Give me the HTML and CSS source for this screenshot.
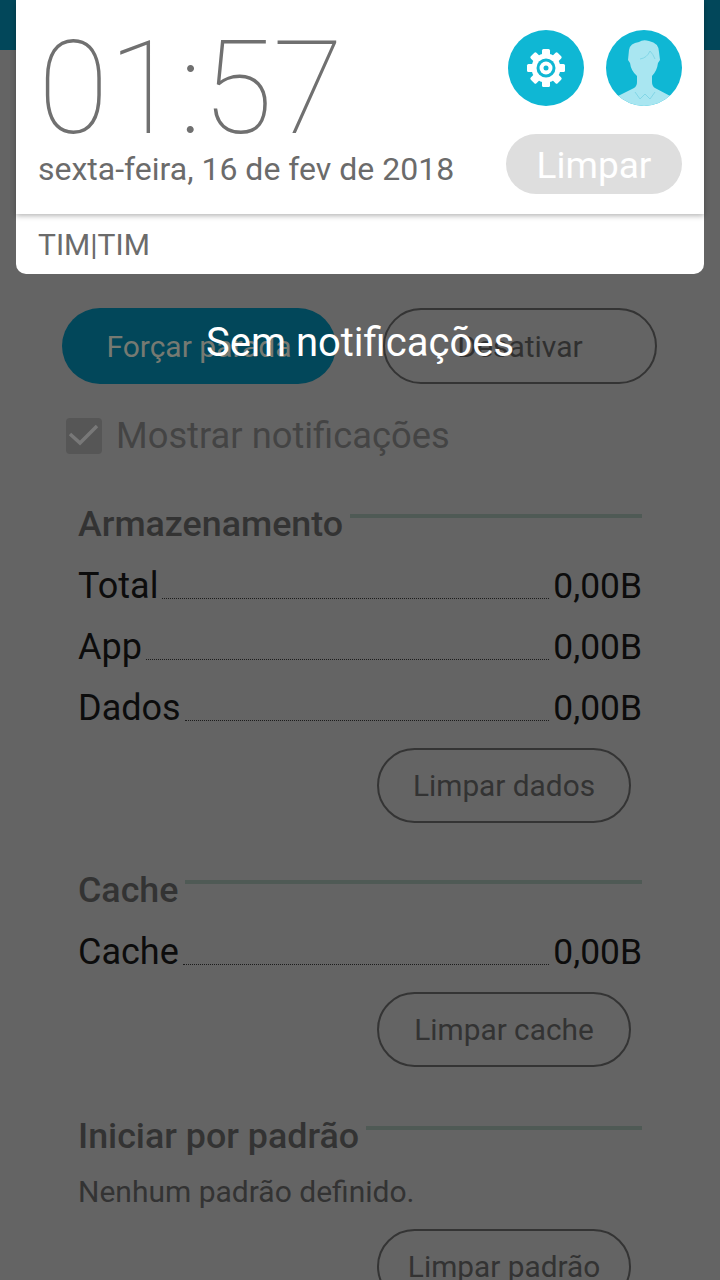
FILE: index.html
```html
<!DOCTYPE html>
<html lang="pt">
<head>
<meta charset="utf-8">
<title>Sem notificações</title>
<link rel="stylesheet" href="styles.css">
</head>
<body>
<div class="screen">
  <div class="topbar"></div>
  <main class="app">
    <div class="actions">
      <div class="btn btn-primary">Forçar parada</div>
      <div class="btn btn-outline">Desativar</div>
    </div>
    <div class="check-row">
      <span class="check"><svg width="36" height="36" viewBox="0 0 36 36"><path d="M4 16l10 9L31 8" fill="none" stroke="#787878" stroke-width="3.500"/></svg></span>
      <span class="check-label">Mostrar notificações</span>
    </div>
    <section class="sec sec-store">
      <div class="sec-head"><h2>Armazenamento</h2><span class="rule"></span></div>
      <div class="row"><span>Total</span><i class="dots"></i><span class="val">0,00B</span></div>
      <div class="row"><span>App</span><i class="dots"></i><span class="val">0,00B</span></div>
      <div class="row"><span>Dados</span><i class="dots"></i><span class="val">0,00B</span></div>
      <div class="btn-line"><div class="btn-small">Limpar dados</div></div>
    </section>
    <section class="sec sec-cache">
      <div class="sec-head"><h2>Cache</h2><span class="rule"></span></div>
      <div class="row"><span>Cache</span><i class="dots"></i><span class="val">0,00B</span></div>
      <div class="btn-line"><div class="btn-small">Limpar cache</div></div>
    </section>
    <section class="sec sec-default">
      <div class="sec-head"><h2>Iniciar por padrão</h2><span class="rule"></span></div>
      <p class="note">Nenhum padrão definido.</p>
      <div class="btn-line btn-line-tight"><div class="btn-small">Limpar padrão</div></div>
    </section>
  </main>

  <div class="empty">Sem notificações</div>

  <aside class="panel">
    <div class="panel-top">
      <div class="when">
        <div class="clock">01:57</div>
        <div class="date">sexta-feira, 16 de fev de 2018</div>
      </div>
      <div class="controls">
        <div class="round-row">
          <span class="round">
            <svg width="40" height="40" viewBox="0 0 40 40">
              <g fill="#fff">
                <circle cx="20" cy="20" r="14.500"/>
                <rect x="16" y="1" width="8" height="38" rx="1.500"/>
                <rect x="16" y="1" width="8" height="38" rx="1.500" transform="rotate(45 20 20)"/>
                <rect x="16" y="1" width="8" height="38" rx="1.500" transform="rotate(90 20 20)"/>
                <rect x="16" y="1" width="8" height="38" rx="1.500" transform="rotate(135 20 20)"/>
              </g>
              <circle cx="20" cy="20" r="9.500" fill="#0fb7d4"/>
              <circle cx="20" cy="20" r="6.500" fill="#fff"/>
              <circle cx="20" cy="20" r="2.500" fill="#0fb7d4"/>
            </svg>
          </span>
          <span class="round">
            <svg width="76" height="76" viewBox="0 0 76 76">
              <path fill="#a9e6f1" d="M8 68L28 58Q31 56 31 52L31 46Q25 41 24 33L22 30L23 20Q24 13 33 12Q37 9 43 11Q53 13 53 22L54 30L52 33Q51 41 46 46L46 52Q46 56 49 58L68 68L68 80L8 80Z"/>
              <path fill="none" stroke="#82d6e6" stroke-width="1" d="M44 21Q41 28 34 29M44 21Q47 24 49 29M29 62L34 69L39 64L44 69L49 62"/>
            </svg>
          </span>
        </div>
        <div class="clear">Limpar</div>
      </div>
    </div>
    <div class="carrier">TIM|TIM</div>
  </aside>
</div>
</body>
</html>
```

FILE: styles.css
```css
* { box-sizing: border-box; }
html, body { margin: 0; padding: 0; }
body { font-family: Roboto, "Noto Sans", sans-serif; background: #646464; }
.screen { position: relative; width: 720px; height: 1280px; overflow: hidden; background: #646464; }
.topbar { height: 50px; background: #02475a; }
.app { padding: 258px 62px 0 62px; }

.actions { display: flex; gap: 47px; }
.btn { height: 76px; width: 274px; border-radius: 38px; font-size: 30px; display: flex; align-items: center; justify-content: center; }
.btn-primary { background: #02475a; color: #767a72; }
.btn-outline { border: 2px solid #343434; color: #303030; }

.check-row { display: flex; align-items: center; gap: 14px; margin: 34px 0 0 4px; height: 36px; }
.check { width: 36px; height: 36px; border-radius: 4px; display: block; background: #565656; }
.check svg { display: block; }
.check-label { font-size: 36.300px; line-height: 38px; color: #444; }

.sec { padding: 0 16px; }
.sec-store { margin-top: 50px; }
.sec-cache { margin-top: 47px; }
.sec-default { margin-top: 49px; }
.sec-head { display: flex; align-items: flex-start; height: 40px; gap: 7px; }
.sec-head h2 { margin: 0; font-size: 35.800px; line-height: 40px; font-weight: 500; color: #333; white-space: nowrap; }
.rule { flex: 1; height: 4px; background: #4f5a55; margin-top: 10px; }

.row { display: flex; align-items: flex-end; height: 61px; font-size: 36px; color: #0c0c0c; line-height: 38px; white-space: nowrap; }
.val { font-size: 35.400px; }
.dots { flex: 1; height: 1px; margin: 0 4px 6px; border-bottom: 1px dotted #1c1c1c; }

.btn-line { display: flex; justify-content: flex-end; margin: 21px 11px 0 0; }
.btn-line-tight { margin-top: 17px; }
.btn-small { width: 254px; height: 75px; border: 2px solid #343434; border-radius: 38px; font-size: 29.800px; color: #333; display: flex; align-items: center; justify-content: center; }
.note { margin: 16px 0 0; font-size: 30px; line-height: 40px; color: #333; }

.empty { position: absolute; left: 0; right: 0; top: 320px; text-align: center; font-size: 40px; line-height: 46px; color: #fff; }

.panel { position: absolute; top: 0; left: 16px; width: 688px; height: 274px; background: #fff; border-radius: 0 0 10px 10px; }
.panel-top { height: 214px; display: flex; justify-content: space-between; box-shadow: 0 2px 5px rgba(0,0,0,.28); }
.when { padding-left: 22px; }
.clock { font-size: 129px; font-weight: 100; line-height: 150px; margin-top: 14px; height: 130px; color: #707070; white-space: nowrap; }
.date { font-size: 32px; line-height: 40px; color: #6b6b6b; margin-top: 5px; white-space: nowrap; }
.controls { padding: 30px 22px 0 0; width: 198px; margin-left: auto; }
.round-row { display: flex; justify-content: space-between; padding-left: 2px; }
.round { width: 76px; height: 76px; border-radius: 50%; background: #0fb7d4; display: flex; align-items: center; justify-content: center; overflow: hidden; }
.round svg { display: block; }
.clear { margin-top: 28px; height: 60px; padding-top: 3px; border-radius: 30px; background: #dedede; color: #fff; font-size: 37px; display: flex; align-items: center; justify-content: center; }
.carrier { padding-left: 22px; font-size: 30px; line-height: 62px; color: #6b6b6b; }
```
